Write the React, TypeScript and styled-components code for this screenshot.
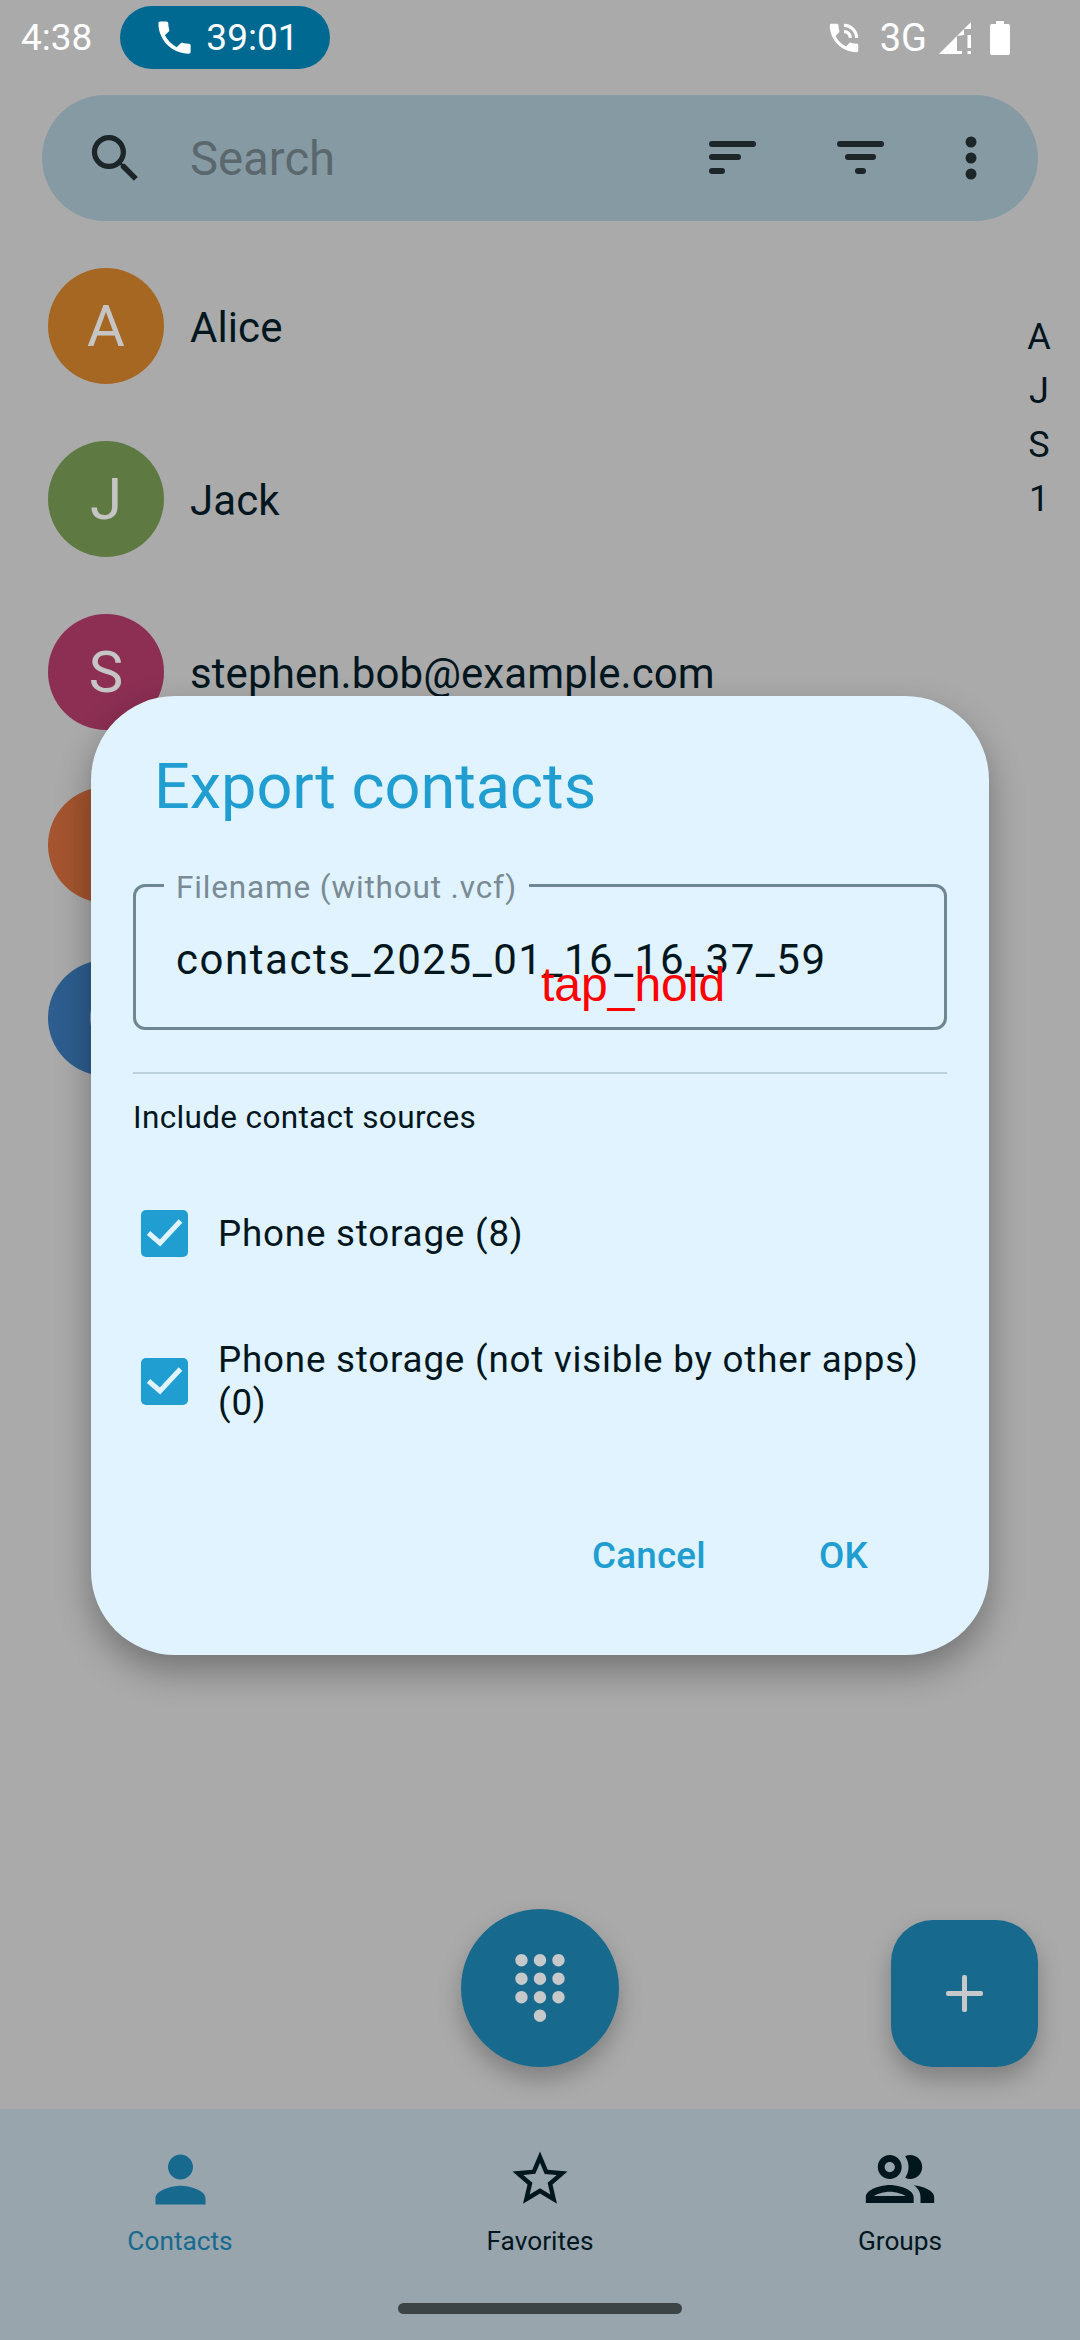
import styled, { createGlobalStyle } from 'styled-components';

const GlobalStyle = createGlobalStyle`
  html, body { margin: 0; padding: 0; background: #aaaaab; }
  body { font-family: Roboto, "Liberation Sans", sans-serif; }
`;

const INK = '#02161e';
const ACCENT = '#219ed1';

const CONTACTS = [
  { initial: 'A', name: 'Alice', color: '#a66722' },
  { initial: 'J', name: 'Jack', color: '#5e7a42' },
  { initial: 'S', name: 'stephen.bob@example.com', color: '#8c2f53' },
  { initial: 'B', name: '', color: '#a5552f' },
  { initial: 'C', name: '', color: '#2d5e8f' },
];

const SOURCES = ['Phone storage (8)', 'Phone storage (not visible by other apps) (0)'];

export default function App() {
  return (
    <Screen>
      <GlobalStyle />
      <StatusBar>
        <StatusLeft>
          <Clock>4:38</Clock>
          <CallPill>
            <svg width="43" height="43" viewBox="0 0 24 24" fill="#fff">
              <path d="M6.62 10.79c1.44 2.83 3.76 5.14 6.59 6.59l2.2-2.2c.27-.27.67-.36 1.02-.24 1.12.37 2.33.57 3.57.57.55 0 1 .45 1 1V20c0 .55-.45 1-1 1-9.39 0-17-7.61-17-17 0-.55.45-1 1-1h3.5c.55 0 1 .45 1 1 0 1.25.2 2.45.57 3.57.11.35.03.74-.25 1.02l-2.2 2.2z" />
            </svg>
            <span>39:01</span>
          </CallPill>
        </StatusLeft>
        <StatusRight>
          <svg width="38" height="38" viewBox="0 0 24 24" fill="#fff">
            <path d="M20 15.5c-1.25 0-2.45-.2-3.57-.57-.35-.11-.74-.03-1.02.24l-2.2 2.2c-2.83-1.44-5.15-3.75-6.59-6.59l2.2-2.21c.28-.26.36-.65.25-1C8.7 6.45 8.5 5.25 8.5 4c0-.55-.45-1-1-1H4c-.55 0-1 .45-1 1 0 9.39 7.61 17 17 17 .55 0 1-.45 1-1v-3.5c0-.55-.45-1-1-1zM19 12h2c0-4.97-4.03-9-9-9v2c3.87 0 7 3.13 7 7zm-4 0h2c0-2.76-2.24-5-5-5v2c1.66 0 3 1.34 3 3z" />
          </svg>
          <NetworkType>3G</NetworkType>
          <SignalIcon width="32" height="32" viewBox="0 0 32 32" fill="#fff">
            <path d="M0 32 L32 0 V7 H25 V13 L18 14 V29 H23 V32 Z" />
            <path d="M28.5 13h3.5v13h-3.5z M28.5 29h3.5v3h-3.5z" />
          </SignalIcon>
          <svg width="20" height="34" viewBox="0 0 20 34" fill="#fff">
            <path d="M6 0h8v3h4a2 2 0 0 1 2 2v27a2 2 0 0 1-2 2H2a2 2 0 0 1-2-2V5a2 2 0 0 1 2-2h4z" />
          </svg>
        </StatusRight>
      </StatusBar>

      <SearchBar>
        <svg width="63" height="63" viewBox="0 0 24 24" fill="#1c2528">
          <path d="M15.5 14h-.79l-.28-.27C15.41 12.59 16 11.11 16 9.5 16 5.91 13.09 3 9.5 3S3 5.91 3 9.5 5.91 16 9.5 16c1.61 0 3.09-.59 4.23-1.57l.27.28v.79l5 4.99L20.49 19l-4.99-5zm-6 0C7.01 14 5 11.99 5 9.5S7.01 5 9.5 5 14 7.01 14 9.5 11.99 14 9.5 14z" />
        </svg>
        <SearchHint>Search</SearchHint>
        <SearchActions>
          <svg width="48" height="34" viewBox="0 0 48 34" fill="#1c2528">
            <rect x="0" y="0" width="47" height="6" rx="3" />
            <rect x="0" y="13" width="32" height="6" rx="3" />
            <rect x="0" y="27" width="16" height="6" rx="3" />
          </svg>
          <svg width="48" height="34" viewBox="0 0 48 34" fill="#1c2528">
            <rect x="0" y="0" width="47" height="6" rx="3" />
            <rect x="8" y="13" width="31" height="6" rx="3" />
            <rect x="18" y="27" width="11" height="6" rx="3" />
          </svg>
          <svg width="12" height="44" viewBox="0 0 12 44" fill="#1c2528">
            <circle cx="6" cy="6" r="5.5" />
            <circle cx="6" cy="22" r="5.5" />
            <circle cx="6" cy="38" r="5.5" />
          </svg>
        </SearchActions>
      </SearchBar>

      <Main>
        <ContactList>
          {CONTACTS.map(c => (
            <ContactRow key={c.color}>
              <Avatar $color={c.color}>{c.initial}</Avatar>
              <ContactName>{c.name}</ContactName>
            </ContactRow>
          ))}
        </ContactList>

        <FastScroller>
          {['A', 'J', 'S', '1'].map(l => (
            <span key={l}>{l}</span>
          ))}
        </FastScroller>

        <DialFab>
          <svg width="74" height="74" viewBox="0 0 24 24" fill="#c6c8c9">
            <path d="M12 19c-1.1 0-2 .9-2 2s.9 2 2 2 2-.9 2-2-.9-2-2-2zM6 1c-1.1 0-2 .9-2 2s.9 2 2 2 2-.9 2-2-.9-2-2-2zm0 6c-1.1 0-2 .9-2 2s.9 2 2 2 2-.9 2-2-.9-2-2-2zm0 6c-1.1 0-2 .9-2 2s.9 2 2 2 2-.9 2-2-.9-2-2-2zm12-8c1.1 0 2-.9 2-2s-.9-2-2-2-2 .9-2 2 .9 2 2 2zm-6 8c-1.1 0-2 .9-2 2s.9 2 2 2 2-.9 2-2-.9-2-2-2zm6 0c-1.1 0-2 .9-2 2s.9 2 2 2 2-.9 2-2-.9-2-2-2zm0-6c-1.1 0-2 .9-2 2s.9 2 2 2 2-.9 2-2-.9-2-2-2zm-6 0c-1.1 0-2 .9-2 2s.9 2 2 2 2-.9 2-2-.9-2-2-2zm0-6c-1.1 0-2 .9-2 2s.9 2 2 2 2-.9 2-2-.9-2-2-2z" />
          </svg>
        </DialFab>
        <AddFab>
          <svg width="37" height="37" viewBox="0 0 37 37" fill="#c6c8c9">
            <rect x="16" y="0" width="5" height="37" rx="2" />
            <rect x="0" y="16" width="37" height="5" rx="2" />
          </svg>
        </AddFab>
      </Main>

      <BottomNav>
        <NavItem $active>
          <NavIcon>
            <svg width="75" height="75" viewBox="0 0 24 24" fill="currentColor">
              <path d="M12 12c2.21 0 4-1.79 4-4s-1.79-4-4-4-4 1.79-4 4 1.79 4 4 4zm0 2c-2.67 0-8 1.34-8 4v2h16v-2c0-2.66-5.33-4-8-4z" />
            </svg>
          </NavIcon>
          <NavLabel>Contacts</NavLabel>
        </NavItem>
        <NavItem>
          <NavIcon>
            <svg width="66" height="66" viewBox="0 0 24 24" fill="currentColor">
              <path d="M22 9.24l-7.19-.62L12 2 9.19 8.63 2 9.24l5.46 4.73L5.82 21 12 17.27 18.18 21l-1.63-7.03L22 9.24zM12 15.4l-3.76 2.27 1-4.28-3.32-2.88 4.38-.38L12 6.1l1.71 4.04 4.38.38-3.32 2.88 1 4.28L12 15.4z" />
            </svg>
          </NavIcon>
          <NavLabel>Favorites</NavLabel>
        </NavItem>
        <NavItem>
          <NavIcon>
            <svg width="82" height="82" viewBox="0 0 24 24" fill="currentColor">
              <path d="M9 13.75c-2.34 0-7 1.17-7 3.5V19h14v-1.75c0-2.33-4.66-3.5-7-3.5zM4.34 17c.84-.58 2.87-1.25 4.66-1.25s3.82.67 4.66 1.25H4.34zM9 12c1.93 0 3.5-1.57 3.5-3.5S10.93 5 9 5 5.5 6.57 5.5 8.5 7.07 12 9 12zm0-5c.83 0 1.5.67 1.5 1.5S9.83 10 9 10s-1.5-.67-1.5-1.5S8.17 7 9 7zm7.04 6.81c1.16.84 1.96 1.96 1.96 3.44V19h4v-1.75c0-2.02-3.5-3.17-5.96-3.44zM15 12c1.93 0 3.5-1.57 3.5-3.5S16.93 5 15 5c-.54 0-1.04.13-1.5.35.63.89 1 1.98 1 3.15s-.37 2.26-1 3.15c.46.22.96.35 1.5.35z" />
            </svg>
          </NavIcon>
          <NavLabel>Groups</NavLabel>
        </NavItem>
        <HomeHandle />
      </BottomNav>

      <DialogLayer>
        <Dialog>
          <DialogTitle>Export contacts</DialogTitle>
          <Field>
            <FieldLabel>Filename (without .vcf)</FieldLabel>
            <FieldValue>contacts_2025_01_16_16_37_59</FieldValue>
            <TapHint>tap_hold</TapHint>
          </Field>
          <Divider />
          <SectionLabel>Include contact sources</SectionLabel>
          <SourceList>
            {SOURCES.map(s => (
              <SourceRow key={s}>
                <CheckBox>
                  <svg width="47" height="47" viewBox="0 0 47 47" fill="none" stroke="#e0f3ff" strokeWidth="5">
                    <path d="M7.5 23 L19 33 L39.5 11" />
                  </svg>
                </CheckBox>
                <SourceText>{s}</SourceText>
              </SourceRow>
            ))}
          </SourceList>
          <DialogActions>
            <TextAction>Cancel</TextAction>
            <TextAction>OK</TextAction>
          </DialogActions>
        </Dialog>
      </DialogLayer>
    </Screen>
  );
}

const Screen = styled.div`
  position: relative;
  display: flex;
  flex-direction: column;
  width: 1080px;
  height: 2340px;
  overflow: hidden;
  background: #aaaaab;
  color: ${INK};
`;

const StatusBar = styled.div`
  display: flex;
  align-items: center;
  justify-content: space-between;
  height: 69px;
  padding: 6px 70px 0 21px;
  box-sizing: border-box;
  color: #fff;
`;

const StatusLeft = styled.div`
  display: flex;
  align-items: center;
  gap: 28px;
`;

const Clock = styled.span`
  font-size: 37px;
`;

const CallPill = styled.div`
  display: flex;
  align-items: center;
  gap: 10px;
  height: 63px;
  width: 210px;
  padding-left: 33px;
  box-sizing: border-box;
  border-radius: 32px;
  background: #006992;
  font-size: 37px;
`;

const StatusRight = styled.div`
  display: flex;
  align-items: center;
  gap: 12px;
`;

const NetworkType = styled.span`
  margin-left: 5px;
  font-size: 38px;
`;

const SignalIcon = styled.svg`
  margin-right: 7px;
`;

const SearchBar = styled.div`
  display: flex;
  align-items: center;
  height: 126px;
  margin: 26px 42px 0;
  padding: 0 61px 0 42px;
  border-radius: 63px;
  background: #869aa3;
`;

const SearchHint = styled.span`
  margin-left: 43px;
  padding-top: 2px;
  font-size: 47.25px;
  color: #5a686e;
`;

const SearchActions = styled.div`
  display: flex;
  align-items: center;
  gap: 80px;
  margin-left: auto;
`;

const Main = styled.div`
  position: relative;
  flex: 1;
  min-height: 0;
`;

const ContactList = styled.div`
  display: flex;
  flex-direction: column;
  gap: 57px;
  padding: 47px 0 0 48px;
`;

const ContactRow = styled.div`
  display: flex;
  align-items: center;
  gap: 26px;
`;

const Avatar = styled.div<{ $color: string }>`
  display: flex;
  align-items: center;
  justify-content: center;
  width: 116px;
  height: 116px;
  border-radius: 50%;
  background: ${p => p.$color};
  color: #c5c5c5;
  font-size: 58px;
`;

const ContactName = styled.span`
  margin-top: 2px;
  font-size: 42px;
  letter-spacing: 0.1px;
`;

const FastScroller = styled.div`
  position: absolute;
  top: 89px;
  right: 15px;
  display: flex;
  flex-direction: column;
  align-items: center;
  width: 52px;
  font-size: 36px;
  line-height: 54px;
`;

const DialFab = styled.div`
  position: absolute;
  top: 1688px;
  left: 461px;
  display: flex;
  align-items: center;
  justify-content: center;
  width: 158px;
  height: 158px;
  border-radius: 50%;
  background: #176a8e;
  box-shadow: 0 12px 24px rgba(0, 0, 0, 0.25);
`;

const AddFab = styled.div`
  position: absolute;
  top: 1699px;
  left: 891px;
  display: flex;
  align-items: center;
  justify-content: center;
  width: 147px;
  height: 147px;
  border-radius: 42px;
  background: #176a8e;
  box-shadow: 0 12px 24px rgba(0, 0, 0, 0.25);
`;

const BottomNav = styled.nav`
  position: relative;
  display: grid;
  grid-template-columns: repeat(3, 1fr);
  height: 231px;
  padding-top: 34px;
  box-sizing: border-box;
  background: #98a5ad;
`;

const NavItem = styled.div<{ $active?: boolean }>`
  display: flex;
  flex-direction: column;
  align-items: center;
  color: ${p => (p.$active ? '#176a8e' : INK)};
`;

const NavIcon = styled.div`
  display: flex;
  align-items: center;
  justify-content: center;
  width: 82px;
  height: 72px;
`;

const NavLabel = styled.span`
  margin-top: 7px;
  font-size: 26.25px;
  line-height: 38px;
`;

const HomeHandle = styled.div`
  position: absolute;
  left: 398px;
  bottom: 26px;
  width: 284px;
  height: 11px;
  border-radius: 6px;
  background: #3d4446;
`;

const DialogLayer = styled.div`
  position: absolute;
  inset: 0;
  display: flex;
  justify-content: center;
  padding-top: 696px;
  box-sizing: border-box;
`;

const Dialog = styled.div`
  display: flex;
  flex-direction: column;
  width: 898px;
  height: 959px;
  padding: 0 42px;
  box-sizing: border-box;
  border-radius: 84px;
  background: #e0f3ff;
  box-shadow: 0 16px 36px rgba(0, 0, 0, 0.32);
`;

const DialogTitle = styled.h2`
  margin: 56px 0 0 21px;
  font-size: 63px;
  font-weight: 400;
  line-height: 70px;
  color: ${ACCENT};
`;

const Field = styled.div`
  position: relative;
  height: 146px;
  margin-top: 62px;
  border: 3px solid #6f8795;
  border-radius: 12px;
  box-sizing: border-box;
`;

const FieldLabel = styled.span`
  position: absolute;
  top: -17px;
  left: 28px;
  padding: 0 12px;
  background: #e0f3ff;
  font-size: 31.5px;
  letter-spacing: 0.85px;
  line-height: 36px;
  color: #7a8b95;
`;

const FieldValue = styled.div`
  padding: 49px 0 0 40px;
  font-size: 42px;
  letter-spacing: 1.55px;
  line-height: 48px;
  color: ${INK};
`;

const TapHint = styled.span`
  position: absolute;
  top: 71px;
  left: 405px;
  font-family: "Liberation Sans", Arial, sans-serif;
  font-size: 48px;
  line-height: 54px;
  color: #ff0000;
`;

const Divider = styled.div`
  height: 2px;
  margin-top: 42px;
  background: #bcd0dd;
`;

const SectionLabel = styled.div`
  margin-top: 26px;
  font-size: 31.5px;
  letter-spacing: 0.35px;
  line-height: 36px;
`;

const SourceList = styled.div`
  display: flex;
  flex-direction: column;
  margin-top: 74px;
  gap: 81px;
`;

const SourceRow = styled.div`
  display: flex;
  align-items: center;
  gap: 30px;
  padding-left: 8px;
`;

const CheckBox = styled.div`
  display: flex;
  flex-shrink: 0;
  align-items: center;
  justify-content: center;
  width: 47px;
  height: 47px;
  border-radius: 5px;
  background: ${ACCENT};
`;

const SourceText = styled.span`
  font-size: 36.75px;
  letter-spacing: 0.8px;
  line-height: 43px;
`;

const DialogActions = styled.div`
  display: flex;
  justify-content: flex-end;
  gap: 113px;
  margin-top: auto;
  margin-bottom: 77px;
  padding-right: 79px;
`;

const TextAction = styled.span`
  font-size: 36.75px;
  font-weight: 500;
  letter-spacing: 0.26px;
  line-height: 44px;
  color: ${ACCENT};
`;
